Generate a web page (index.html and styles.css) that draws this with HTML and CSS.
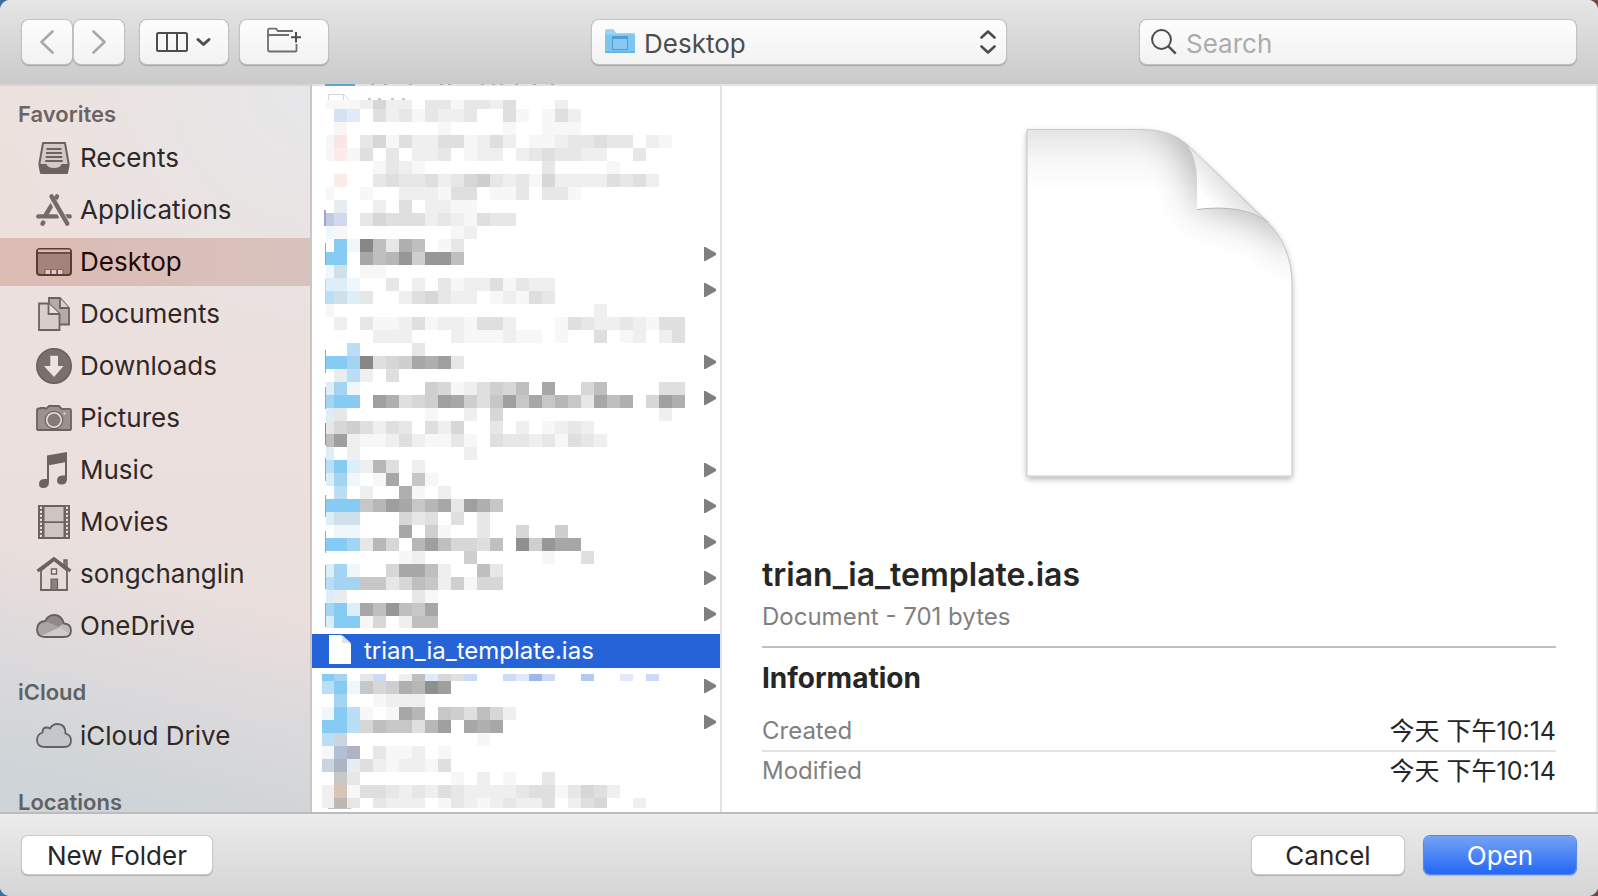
FILE: index.html
```html
<!DOCTYPE html>
<html lang="en">
<head>
<meta charset="utf-8">
<title>Open</title>
<meta name="viewport" content="width=device-width, initial-scale=1">
<link rel="stylesheet" href="styles.css">
</head>
<body>
<main class="dialog">
  <header class="toolbar">
    <div class="tools">
      <div class="nav">
        <button class="tool tool-nav" type="button" aria-label="Back"><svg width="16" height="24" viewBox="0 0 16 24"><path d="M13.500 1.500 2.500 12l11 10.500" fill="none" stroke="#a9a9a9" stroke-width="2.600" stroke-linecap="round" stroke-linejoin="round"/></svg></button>
        <button class="tool tool-nav" type="button" aria-label="Forward"><svg width="16" height="24" viewBox="0 0 16 24"><path d="M2.500 1.500 13.500 12l-11 10.500" fill="none" stroke="#a9a9a9" stroke-width="2.600" stroke-linecap="round" stroke-linejoin="round"/></svg></button>
      </div>
      <button class="tool" type="button" aria-label="View as columns"><svg width="56" height="20" viewBox="0 0 56 20"><g fill="none" stroke="#4d4d4d"><rect x="1" y="1" width="30" height="18" rx="1.500" stroke-width="2"/><path d="M11 1v18M21 1v18" stroke-width="2"/><path d="m42 7.500 5.500 5 5.500-5" stroke-width="3" stroke-linecap="round" stroke-linejoin="round"/></g></svg></button>
      <button class="tool" type="button" aria-label="New folder with selection"><svg class="lift" width="34" height="26" viewBox="0 0 34 26"><g fill="none" stroke="#6e6e6e" stroke-width="1.800"><path d="M26 4H11L9 1.700H2.500Q1 1.700 1 3.200V23q0 1.500 1.500 1.500h26q1 0 1-1V17"/><path d="M1 10V9.200Q1 8 2.500 8H22"/></g><path d="M29 5v10.500M24 10.200h10" stroke="#4d4d4d" stroke-width="2"/></svg></button>
    </div>
    <div class="place">
      <svg class="place-icon" width="30" height="26" viewBox="0 0 30 26"><path d="M0 2q0-1.500 1.500-1.500h7L11 4h17.500Q30 4 30 5.500v17q0 1.500-1.500 1.500h-27Q0 24 0 22.500z" fill="#7cc6f2"/><path d="M0 2q0-1.500 1.500-1.500h7L11 4h17.500Q30 4 30 5.500H0z" fill="#9bd3f3"/><path d="M0 23h30" stroke="#62aedd" stroke-width="1.500"/><rect x="7.500" y="7.500" width="15" height="13" fill="#86c9f3" stroke="#4f9fd6"/><path d="M8 9h14" stroke="#4f9fd6" stroke-width="2"/></svg>
      <select class="place-select" aria-label="Location"><option>Desktop</option></select>
      <svg class="place-arrows" width="16" height="26" viewBox="0 0 16 26"><path d="m1.500 8.500 6.500-6 6.500 6M1.500 17.500l6.500 6 6.500-6" fill="none" stroke="#4d4d4d" stroke-width="2.600" stroke-linecap="round" stroke-linejoin="round"/></svg>
    </div>
    <div class="search">
      <svg class="search-icon" width="26" height="26" viewBox="0 0 26 26"><circle cx="10.500" cy="10.500" r="9.400" fill="none" stroke="#4d4d4d" stroke-width="2"/><path d="m17.200 17.200 7.500 7.500" stroke="#4d4d4d" stroke-width="2.400"/></svg>
      <input class="search-input" type="search" placeholder="Search" aria-label="Search">
    </div>
  </header>

  <div class="browser">
    <nav class="sidebar" aria-label="Places">
      <h2 class="group">Favorites</h2>
      <ul class="places">
        <li><a class="item" href="#recents"><svg class="icon" viewBox="0 0 36 36"><path d="M7 3h22l3.500 20v2.500L31 33H5l-1.500-7.500V23z" fill="#d3cac8" stroke="#6d6260" stroke-width="2" stroke-linejoin="round"/><path d="M3 24h7.500q1 4 7.500 4t7.500-4H33l-2 9H5z" fill="#6d6260"/><path d="M10.500 9h15M10 13h16M9.700 17h16.600M9.300 21h17.400" stroke="#6d6260" stroke-width="1.800"/></svg>Recents</a></li>
        <li><a class="item" href="#applications"><svg class="icon" viewBox="0 0 36 36"><g fill="none" stroke="#756a67" stroke-width="4.400" stroke-linecap="round"><path d="M21 4.400 10 22.500M2.300 24.400H21M29 24.400h4.700M6.500 31.700l.8-1.200"/></g><path d="m17 8.500 12 20" stroke="#e9e2e0" stroke-width="6.800"/><path d="m15.500 4.400 15.800 27.300" stroke="#756a67" stroke-width="4.400" stroke-linecap="round"/></svg>Applications</a></li>
        <li><a class="item is-active" href="#desktop" aria-current="page"><svg class="icon" viewBox="0 0 36 36"><rect x="1" y="5" width="34" height="26" rx="3" fill="#a3837c" stroke="#5c3a34" stroke-width="2"/><path d="M2 6.500q0-1 1-1h30q1 0 1 1V8H2z" fill="#d5b9b2"/><path d="M1 9h34" stroke="#5c3a34" stroke-width="1.600"/><path d="M8.500 25.500h19V30h-19z" fill="#7b5851"/><path d="M9.500 26h4.500v4H9.500zM15.700 26h4.500v4h-4.500zM22 26h4.500v4H22z" fill="#e3c9c2"/></svg>Desktop</a></li>
        <li><a class="item" href="#documents"><svg class="icon" viewBox="0 0 36 36"><g stroke="#6d6260" stroke-width="1.800"><path d="M13 2h11l9 10v16.500H13z" fill="#b4aaa8"/><path d="M24 2v10h9" fill="#d9d0ce"/><path d="M3 7.500h9.500L23.500 18v16H3z" fill="#d7cecc"/><path d="M12.500 7.500V18h11" fill="#e8e0de"/></g></svg>Documents</a></li>
        <li><a class="item" href="#downloads"><svg class="icon" viewBox="0 0 36 36"><circle cx="18" cy="18" r="17.200" fill="#7a6f6c" stroke="#6a5f5c" stroke-width="1.600"/><path d="M14.300 7.700H22V18h5.600L18 29 8 18h6.300z" fill="#ece4e1"/></svg>Downloads</a></li>
        <li><a class="item" href="#pictures"><svg class="icon" viewBox="0 0 36 36"><path d="M1 10q0-1.500 1.500-1.500H4L4.500 8h4l.5.500h1.500L13 6h10l2.500 2.800h8q1.500 0 1.500 1.500V29q0 1-1 1H2q-1 0-1-1z" fill="#9b918e" stroke="#6d6260" stroke-width="1.800"/><circle cx="18" cy="20" r="9.300" fill="#6d6260"/><circle cx="18" cy="20" r="7.300" fill="#857a77" stroke="#e8dfdd" stroke-width="1.600"/><circle cx="28.500" cy="13.500" r="1.100" fill="#e8dfdd"/></svg>Pictures</a></li>
        <li><a class="item" href="#music"><svg class="icon" viewBox="0 0 36 36"><path d="M11 3.500 31 0v27q0 5.500-5.500 5.500-4.500 0-4.500-4 0-5 6-5h2V10.300L13 13.300V30q0 6-6 6-4 0-4-4 0-5 6-5h2z" fill="#6d6260"/></svg>Music</a></li>
        <li><a class="item" href="#movies"><svg class="icon" viewBox="0 0 36 36"><path d="M2 1h32v34H2z" fill="#6d6260"/><path d="M8.500 3h19v14.300h-19zM8.500 19h19v14h-19z" fill="#cec5c3"/><path d="M5 2.700V34M31 2.700V34" stroke="#e8dfdd" stroke-width="2" stroke-dasharray="2.300 1.700"/></svg>Movies</a></li>
        <li><a class="item" href="#home"><svg class="icon" viewBox="0 0 36 36"><path d="M28 4h3v9l-3-3z" fill="#8b817e" stroke="#6d6260" stroke-width="1.400"/><path d="M5 14.500 18 4l13 10.500V34H5z" fill="#e5dcda" stroke="#6d6260" stroke-width="1.800"/><path d="M1.500 15 18 2.800 34.500 15" fill="none" stroke="#6d6260" stroke-width="3.400"/><path d="M15.500 13h5v5h-5z" fill="#f0e8e6" stroke="#6d6260" stroke-width="1.400"/><path d="M15 23h6.500v11H15z" fill="#8b817e" stroke="#6d6260" stroke-width="1.200"/></svg>songchanglin</a></li>
        <li><a class="item" href="#onedrive"><svg class="icon" viewBox="0 0 36 36"><path d="M9 29q-8 0-8-7.500 0-8 8.500-8.500Q12 7 18 7q7.500 0 10 8.500 7 .5 7 7 0 6.500-7 6.500z" fill="#aaa4a2"/><path d="M9.500 13Q12 7 18 7q7.500 0 10 8.500L22.500 19z" fill="#928a88"/><path d="M5 28l19-9 10 7q-2 3-6 3H9q-3 0-4-1z" fill="#d0cac9"/><path d="M22.500 19l5.500-3.500q7 .5 7 7l-1 3z" fill="#c0b9b7"/><path d="M9 29q-8 0-8-7.500 0-8 8.500-8.500Q12 7 18 7q7.500 0 10 8.500 7 .5 7 7 0 6.500-7 6.500z" fill="none" stroke="#655f5e" stroke-width="1.800"/></svg>OneDrive</a></li>
      </ul>
      <h2 class="group group-next">iCloud</h2>
      <ul class="places">
        <li><a class="item" href="#icloud"><svg class="icon" viewBox="0 0 36 36"><path d="M9 29q-8 0-8-7 0-5.500 5.500-7.500 0-5 4-5 2 0 3.500 1Q16.500 6 21.500 6q8 0 8 9.500 5.500 1.500 5.500 7Q35 29 28 29z" fill="#c3c6ca" stroke="#606266" stroke-width="1.800"/></svg>iCloud Drive</a></li>
      </ul>
      <h2 class="group group-next">Locations</h2>
    </nav>

    <section class="files" aria-label="Desktop">
      <ul class="file-list" id="file-list">
        <li class="file"></li><li class="file"></li><li class="file"></li><li class="file"></li><li class="file"></li>
        <li class="file has-children"></li><li class="file has-children"></li><li class="file"></li>
        <li class="file has-children"></li><li class="file has-children"></li><li class="file"></li>
        <li class="file has-children"></li><li class="file has-children"></li><li class="file has-children"></li>
        <li class="file has-children"></li><li class="file has-children"></li>
        <li class="file is-selected"><svg class="file-icon" width="24" height="30" viewBox="0 0 24 30"><path d="M1 0h12l10 9v20H1z" fill="#fff"/><path d="M14 0v8h9z" fill="#dfe3ea"/></svg><span>trian_ia_template.ias</span></li>
        <li class="file has-children"></li><li class="file has-children"></li><li class="file"></li><li class="file"></li>
      </ul>
      <svg class="mosaic" id="mosaic" width="408" height="728" viewBox="312 84 408 728" aria-hidden="true"></svg>
    </section>

    <section class="preview" aria-label="Preview">
      <svg class="document" width="300" height="390" viewBox="1010 110 300 390" aria-hidden="true">
        <defs>
          <linearGradient id="top" x1="0" y1="129" x2="0" y2="190" gradientUnits="userSpaceOnUse"><stop offset="0" stop-color="#e4e4e4"/><stop offset=".5" stop-color="#f7f7f7"/><stop offset="1" stop-color="#fff"/></linearGradient>
          <linearGradient id="flap" x1="1198" y1="208" x2="1230" y2="180" gradientUnits="userSpaceOnUse"><stop offset=".3" stop-color="#fff"/><stop offset="1" stop-color="#e0e0e0"/></linearGradient>
          <clipPath id="page"><path d="M1028 129.500h115q28 0 45 15l79 76q26 25 26 65v191h-265z"/></clipPath>
          <filter id="soft" x="-50%" y="-50%" width="200%" height="200%"><feGaussianBlur stdDeviation="19"/></filter>
          <filter id="shadow" x="-10%" y="-10%" width="120%" height="120%"><feGaussianBlur stdDeviation="3"/></filter>
        </defs>
        <path d="M1028 132h115q28 0 45 15l79 76q26 25 26 65v191h-265z" fill="#000" opacity=".3" filter="url(#shadow)"/>
        <path d="M1028 129.500h115q28 0 45 15l79 76q26 25 26 65v191h-265z" fill="url(#top)"/>
        <g clip-path="url(#page)">
          <path d="M1150 110q44 30 48 100 55-6 110 50V110z" fill="#777" opacity=".55" filter="url(#soft)"/>
        </g>
        <path d="M1028 476V129.500h115q28 0 45 15l79 76q26 25 26 65V476z" fill="none" stroke="#c9c9c9"/>
        <path d="M1188 144.500q10 14 10 36v29q46-6 72 15z" fill="url(#flap)"/>
        <path d="m1188 144.500 82 79" stroke="#cfcfcf" fill="none"/>
        <path d="M1198 209.500q46-6 71 13" stroke="#b4b4b4" fill="none"/>
      </svg>
      <h1 class="file-name">trian_ia_template.ias</h1>
      <p class="file-kind">Document - 701 bytes</p>
      <h2 class="info-title">Information</h2>
      <dl class="info">
        <div class="info-row"><dt>Created</dt><dd>今天 下午10:14</dd></div>
        <div class="info-row"><dt>Modified</dt><dd>今天 下午10:14</dd></div>
      </dl>
    </section>
  </div>

  <footer class="actions">
    <button class="action action-new" type="button">New Folder</button>
    <button class="action" type="button">Cancel</button>
    <button class="action action-primary" type="button">Open</button>
  </footer>
</main>
<script src="mosaic.js"></script>
</body>
</html>
```
FILE: styles.css
```css
* { box-sizing: border-box; margin: 0; padding: 0; }

body {
  background: linear-gradient(90deg, #3f6f9f, #6d4a48);
  font-family: Inter, "Noto Sans CJK SC", sans-serif;
  font-size: 26px;
  color: #262626;
}

button, input, select { font: inherit; }
ul { list-style: none; }
svg { display: block; flex: none; }

.dialog {
  display: flex;
  flex-direction: column;
  height: 100vh;
  min-height: 600px;
  border-radius: 10px;
  overflow: hidden;
  background: #fff;
}

/* Toolbar */
.toolbar {
  display: grid;
  grid-template-columns: 1fr minmax(0, 414px) 1fr;
  align-items: center;
  flex: none;
  height: 84px;
  padding: 0 22px;
  background: linear-gradient(#e6e6e6, #cacaca);
}
.tools { display: flex; gap: 12px; }
.nav { display: flex; gap: 2px; margin-right: 4px; }
.tool, .place-select, .search-input {
  height: 44px;
  border: 0;
  border-radius: 7px;
  background: linear-gradient(#fdfdfd, #f2f2f2);
  box-shadow: 0 0 0 1px #c2c2c2, 0 1px 1px 1px #a3a3a3;
}
.tool { display: flex; align-items: center; justify-content: center; width: 88px; }
.tool-nav { width: 50px; }
.lift { margin-bottom: 4px; }

.place, .search { display: grid; align-items: center; }
.place > *, .search > * { grid-area: 1 / 1; }
.place-select, .search-input { width: 100%; appearance: none; outline: 0; }
.place-select { padding: 2px 50px 0 52px; color: #4d4d4d; }
.place-icon, .place-arrows, .search-icon { z-index: 1; pointer-events: none; }
.place-icon { margin-left: 13px; }
.place-arrows { justify-self: end; margin-right: 10px; }
.search { justify-self: end; width: 436px; }
.search-icon { margin-left: 11px; }
.search-input { padding: 2px 12px 0 46px; }
.search-input::placeholder { color: #acacac; opacity: 1; }

/* Middle */
.browser { display: flex; flex: 1; min-height: 0; }

.sidebar {
  flex: 0 0 312px;
  padding-top: 8px;
  overflow: hidden;
  border-top: 2px solid #d8d4d4;
  border-right: 2px solid #cbc5c5;
  background:
    radial-gradient(circle at 100% 0, #e6e7e9, #e6e7e900 300px),
    linear-gradient(194deg, #e8dedb00 66%, #d8d8db 84%, #ced4d7 94%),
    linear-gradient(#ede1de, #e8dedb);
}
.group {
  padding-left: 18px;
  font-size: 22px;
  font-weight: 600;
  line-height: 40px;
  color: #6c6463;
}
.group-next { margin-top: 22px; color: #5f6266; }
.places { display: flex; flex-direction: column; gap: 4px; }
.item {
  display: flex;
  align-items: center;
  gap: 8px;
  height: 48px;
  padding-left: 36px;
  line-height: 34px;
  color: #2f2827;
  text-decoration: none;
}
.item.is-active { color: #200806; background: linear-gradient(90deg, #dcbbb3, #d8c2bd); }
.icon { width: 36px; height: 36px; }

.files {
  position: relative;
  flex: 0 0 410px;
  overflow: hidden;
  border-right: 2px solid #e2e2e2;
}
.file-list { display: flex; flex-direction: column; gap: 2px; margin-top: -26px; }
.file {
  display: flex;
  align-items: center;
  flex: none;
  gap: 12px;
  height: 34px;
  padding: 0 4px 2px 16px;
  font-size: 24px;
}
.has-children::after {
  content: "";
  width: 12px;
  height: 14px;
  margin-left: auto;
  background: #7f7f7f;
  clip-path: polygon(0 0, 12% 0, 100% 43%, 100% 57%, 12% 100%, 0 100%);
}
.is-selected { color: #fff; background: #2563d9; }
.mosaic { position: absolute; top: 0; left: 0; }

/* Preview */
.preview {
  flex: 1;
  min-width: 0;
  padding: 24px 40px 0;
  overflow: hidden;
  border-top: 2px solid #e3e3e3;
  border-right: 2px solid #e6e6e6;
}
.document { margin: 0 auto; }
.file-name { margin-top: 55px; font-size: 32px; font-weight: 600; line-height: 40px; }
.file-kind {
  margin-top: 6px;
  padding-bottom: 13px;
  border-bottom: 2px solid #bfbfbf;
  font-size: 24px;
  line-height: 32px;
  color: #808080;
}
.info-title { margin-top: 15px; font-size: 28px; font-weight: 700; line-height: 30px; }
.info { margin-top: 19px; font-size: 24px; line-height: 38px; }
.info-row { display: flex; justify-content: space-between; }
.info-row + .info-row { border-top: 2px solid #e3e3e3; }
.info dt { color: #808080; }
.info dd { font-size: 25px; }

/* Footer */
.actions {
  display: flex;
  align-items: center;
  flex: none;
  gap: 20px;
  height: 84px;
  padding: 0 22px;
  border-top: 2px solid #bcbcbc;
  background: linear-gradient(#ececec, #d5d5d5);
}
.action {
  width: 152px;
  height: 38px;
  border: 0;
  border-radius: 6px;
  background: #fff;
  color: #262626;
  box-shadow: 0 0 0 1px #cbcbcb, 0 1px 1px 1px #adadad;
}
.action-new { width: 190px; margin-right: auto; }
.action-primary {
  color: #fff;
  background: linear-gradient(#75a3f4, #2467f6);
  box-shadow: 0 0 0 1px #5488ea, 0 1px 1px 1px #a5b3d3;
}
```
FILE: mosaic.js
```js
// Pixelated cover over the private file names.
// Hex digits are grey levels, capitals are tints, dots are empty cells.
const tints = {
  A: '#86cbf4', B: '#a3d5f3', C: '#b9def5', D: '#dceef8', E: '#eff7fc', F: '#cee0ea',
  G: '#d5e2f3', H: '#fae6e4', I: '#faede9', J: '#c2cadf', K: '#d1daec', L: '#e8edf2',
  M: '#cddaf6', N: '#9db6ee', O: '#afc1d3', P: '#b0b3c6', Q: '#cdd3df', R: '#d8c4b7',
  S: '#bfb7b3', T: '#e2e9f8', U: '#b5c8f1'
};
const cell = 13;
const columnStart = 321;

const upper = [
  '1112522033133240002', '.GT04231322300410142', '.1.......1....1..111',
  '1H.351422441242.11233433021', '1I14.302230122.2343322..3', '....1321.........3....1',
  '.I..3433423563231522224342', '1..1..222144.1130331', '.L..2.4.2211',
  'JK.354442321433', 'E1........12', '.AEf83a8013', 'AA.b89d6dd8', 'EF.11',
  'DDE..3.2.312241322', 'CFD3..245322012143', '1........0...........2',
  '.2.311241221442...1432232144', '....222...2111211.1004.12024', '..C....3',
  'AABf456bac3', '.LC2.4', 'DBE.....65124658.b..58....44', 'BAA.ca456cb647c7b7973b8a.5ca',
  'D3......1..2.5............2', '3564243.425..302.1232', '8c21124211310433231432',
  'D.2........2', 'CAD294.2', 'DBE01b.71', '.C.2..a1.2', 'AAA79cb79b3ca7',
  'DFF...534.4.3', '.EE...b.61..3..5..6', 'AAB395.9c85548.e6dbb', '......12...6.....1..4',
  'DBE..5bb82..83', 'CBB77358726155', 'DL.....31', 'BADb8d87b', 'DAA15.288'
];
const lower = [
  'AB.3M.28T54M..MTNM..U..T.M', 'CAE756a9ec', '.B..1222', 'EAC101b9.764852',
  'AAC587749c.bab', 'CQ..........1', '1OP0311201', 'QPL4212214', '.73.......1.2.1..3',
  '2R144323243222234413542', '2S3.3222.1321232240245..2'
];
// Slivers of the icons that show round the cover: x, y, width, height, colour.
const slivers = [
  [312, 84, 408, 2, '#e1e1e1'], [325, 84, 30, 2, '#5aa5cf'], [324, 210, 2, 16, '#9aa9cb'],
  [325, 243, 1, 22, '#6cb5dc'], [325, 279, 1, 25, '#b9d9e8'],
  [325, 350, 1, 23, '#6cb5dc'], [325, 387, 1, 22, '#6cb5dc'],
  [325, 423, 1, 22, '#8c8c8c'], [325, 458, 1, 23, '#6cb5dc'],
  [325, 495, 1, 22, '#6cb5dc'], [325, 531, 1, 22, '#6cb5dc'],
  [325, 565, 1, 24, '#6cb5dc'], [325, 603, 1, 24, '#6cb5dc'],
  [328, 808, 23, 1, '#c4c4c4']
];

const mosaic = document.getElementById('mosaic');
function draw(x, y, width, height, fill) {
  const rect = document.createElementNS('http://www.w3.org/2000/svg', 'rect');
  Object.entries({ x, y, width, height, fill }).forEach(([key, value]) => rect.setAttribute(key, value));
  mosaic.append(rect);
}
function drawBlock(rows, left, top, firstHeight, bottom) {
  let y = top;
  rows.forEach((row, index) => {
    const height = Math.min(index ? cell : firstHeight, bottom - y);
    [...row].forEach((code, column) => {
      if (code === '.') return;
      const level = 255 - parseInt(code, 16) * 8;
      const fill = tints[code] || `rgb(${level},${level},${level})`;
      const x = Math.max(columnStart + column * cell, left);
      draw(x, y, columnStart + (column + 1) * cell - x, height, fill);
    });
    y += height;
  });
}
const page = document.createElementNS('http://www.w3.org/2000/svg', 'path');
page.setAttribute('d', 'M328.500 100v-5.500h15l5.500 5.500M343.500 94.500v5.500');
page.setAttribute('fill', 'none');
page.setAttribute('stroke', '#d6d6d6');
mosaic.append(page);
[368, 378, 391, 402].forEach((x) => draw(x, 98, 3, 2, '#c9c9c9'));
drawBlock(upper, 326, 100, 9, 628);
drawBlock(lower, 322, 674, 7, 808);
slivers.forEach((sliver) => draw(...sliver));
[371, 384, 409, 440, 448, 481, 492, 500, 515, 533, 551].forEach((x) => draw(x, 84, 3, 1, '#a9a9a9'));
```
